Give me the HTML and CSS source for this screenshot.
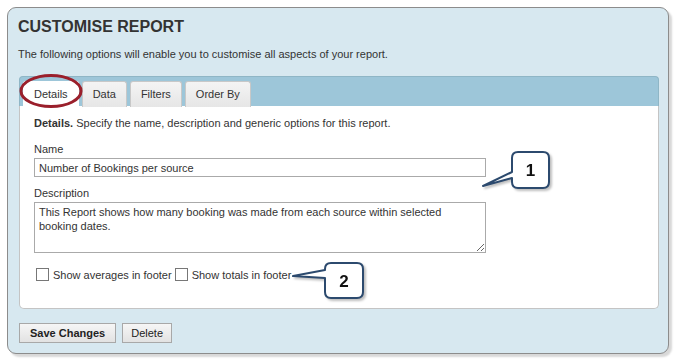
FILE: index.html
```html
<!DOCTYPE html>
<html lang="en">
<head>
  <meta charset="UTF-8" />
  <meta name="viewport" content="width=device-width, initial-scale=1.0"/>
  <title>Customise Report</title>
  <link rel="stylesheet" href="styles.css">
</head>
<body>
  <div class="panel">
    <h1>CUSTOMISE REPORT</h1>
    <p class="intro">The following options will enable you to customise all aspects of your report.</p>

    <div class="tabs">
      <div class="tab-bar">
        <div class="tab active">Details</div>
        <div class="tab">Data</div>
        <div class="tab">Filters</div>
        <div class="tab">Order By</div>
      </div>
      <div class="tab-body">
        <p class="lead"><b>Details.</b> Specify the name, description and generic options for this report.</p>
        <label class="field-label" for="name">Name</label>
        <input class="text-input" id="name" type="text" value="Number of Bookings per source">
        <label class="field-label" for="desc">Description</label>
        <textarea class="text-area" id="desc">This Report shows how many booking was made from each source within selected booking dates.</textarea>
        <div class="options">
          <label class="check"><input type="checkbox"> Show averages in footer</label>
          <label class="check"><input type="checkbox"> Show totals in footer</label>
        </div>
      </div>
    </div>

    <div class="buttons">
      <button class="btn btn-main">Save Changes</button>
      <button class="btn">Delete</button>
    </div>

    <!-- annotations -->
    <svg class="ring" width="66" height="38" viewBox="0 0 66 38">
      <ellipse cx="33" cy="19" rx="30" ry="15.5" fill="none" stroke="#9a1f2b" stroke-width="3"/>
    </svg>
    <svg class="callout callout-1" width="80" height="46" viewBox="0 0 80 46">
      <path d="M40 4 H65 Q71 4 71 10 V34 Q71 40 65 40 H40 Q34 40 34 34 V30 L5 38 L34 24 V10 Q34 4 40 4 Z" fill="#fff" stroke="#2c4a6e" stroke-width="2" stroke-linejoin="round"/>
      <text x="52.5" y="28" text-anchor="middle">1</text>
    </svg>
    <svg class="callout callout-2" width="80" height="44" viewBox="0 0 80 44">
      <path d="M41 3 H67 Q73 3 73 9 V32 Q73 38 67 38 H41 Q35 38 35 32 V18 L3 16 L35 10 V9 Q35 3 41 3 Z" fill="#fff" stroke="#2c4a6e" stroke-width="2" stroke-linejoin="round"/>
      <text x="54" y="27" text-anchor="middle">2</text>
    </svg>
  </div>
</body>
</html>
```

FILE: styles.css
```css
body {
  margin: 0;
  padding: 7px;
  font-family: "Liberation Sans", Arial, sans-serif;
  font-size: 11px;
  color: #333;
  background: #fff;
}

.panel {
  position: relative;
  width: 640px;
  padding: 9px 10px 10px 10px;
  background: #d7e8f0;
  border: 1px solid #8c8c8c;
  border-radius: 9px;
  box-shadow: 3px 3px 2px #d8d8d8;
}

h1 {
  margin: 0;
  font-size: 16px;
  line-height: 20px;
  color: #333;
}

.intro {
  margin: 10px 0 15px;
  line-height: 14px;
}

.tabs {
  width: 640px;
  margin-left: 1px;
}

.tab-bar {
  display: flex;
  gap: 3px;
  height: 30px;
  padding: 4px 0 0 3px;
  box-sizing: border-box;
  background: #9dc6d9;
  border: 1px solid #8fb6c6;
  border-bottom: none;
  border-radius: 4px 4px 0 0;
}

.tab {
  height: 26px;
  line-height: 24px;
  padding: 0 10px;
  background: linear-gradient(#f4f4f4, #e6e6e6);
  border: 1px solid #c8c8c8;
  border-bottom: none;
  border-radius: 3px 3px 0 0;
  box-sizing: border-box;
}

.tab.active {
  background: #fff;
  border-color: #fff;
}

.tab-body {
  height: 203px;
  box-sizing: border-box;
  padding: 10px 14px 0;
  background: #fff;
  border: 1px solid #c4c4c4;
  border-top: none;
  border-radius: 0 0 5px 5px;
}

.lead {
  margin: 0 0 12px;
  line-height: 14px;
}

.field-label {
  display: block;
  line-height: 14px;
  margin-bottom: 2px;
}

.text-input,
.text-area {
  display: block;
  width: 452px;
  box-sizing: border-box;
  border: 1px solid #aaa;
  font-family: "Liberation Sans", Arial, sans-serif;
  font-size: 11px;
  color: #333;
  padding: 2px 4px;
  margin: 0 0 9px;
}

.text-input {
  height: 19px;
}

.text-area {
  height: 51px;
  line-height: 14px;
  margin-bottom: 15px;
}

.options {
  display: flex;
  align-items: center;
  gap: 3px;
  padding-left: 2px;
}

.check {
  display: flex;
  align-items: center;
  gap: 4px;
}

.check input {
  appearance: none;
  width: 13px;
  height: 13px;
  margin: 0;
  border: 1px solid #777;
  background: #fff;
}

.buttons {
  display: flex;
  gap: 6px;
  margin-top: 14px;
  padding-left: 1px;
}

.btn {
  height: 20px;
  padding: 0 8px;
  font-family: "Liberation Sans", Arial, sans-serif;
  font-size: 11px;
  color: #222;
  background: linear-gradient(#f6f6f6, #e2e2e2);
  border: 1px solid #a8a8a8;
  border-radius: 0;
}

.btn-main {
  font-weight: bold;
  padding: 0 10px;
}

.ring {
  position: absolute;
  left: 10px;
  top: 64px;
}

.callout {
  position: absolute;
  filter: drop-shadow(2px 2px 1px rgba(0, 0, 0, 0.25));
}

.callout text {
  font-family: "Liberation Sans", Arial, sans-serif;
  font-size: 17px;
  font-weight: bold;
  fill: #111;
}

.callout-1 {
  left: 470px;
  top: 140px;
}

.callout-2 {
  left: 282px;
  top: 252px;
}
```
